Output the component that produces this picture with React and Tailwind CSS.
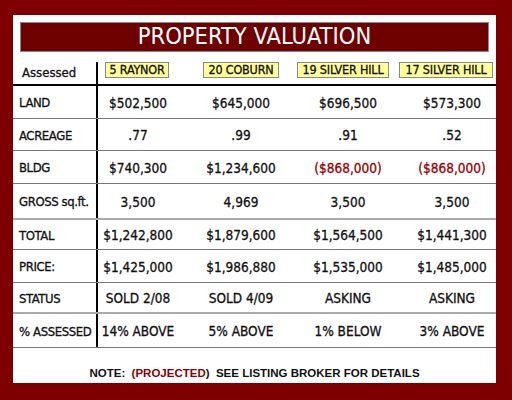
import React from "react";

const rows = [
  { label: "LAND", h: "h-[33px]", line: "border-b border-[#777]", v: ["$502,500", "$645,000", "$696,500", "$573,300"] },
  { label: "ACREAGE", h: "h-[32px]", line: "border-b border-[#777]", v: [".77", ".99", ".91", ".52"] },
  { label: "BLDG", h: "h-[33px]", line: "border-b border-[#777]", v: ["$740,300", "$1,234,600", "($868,000)", "($868,000)"], red: [false, false, true, true] },
  { label: "GROSS sq.ft.", h: "h-[36px]", line: "border-b-2 border-[#aaa]", v: ["3,500", "4,969", "3,500", "3,500"] },
  { label: "TOTAL", h: "h-[30px]", line: "border-b border-[#777]", v: ["$1,242,800", "$1,879,600", "$1,564,500", "$1,441,300"] },
  { label: "PRICE:", h: "h-[33px]", line: "border-b border-[#777]", v: ["$1,425,000", "$1,986,880", "$1,535,000", "$1,485,000"] },
  { label: "STATUS", h: "h-[31px]", line: "border-b-2 border-[#aaa]", v: ["SOLD 2/08", "SOLD 4/09", "ASKING", "ASKING"] },
  { label: "% ASSESSED", h: "h-[34px]", line: "border-b border-[#777]", v: ["14% ABOVE", "5% ABOVE", "1% BELOW", "3% ABOVE"] },
];

const font = { fontFamily: '"DejaVu Sans Condensed", "DejaVu Sans", sans-serif' };

const box =
  "h-[16px] bg-[#ffff99] border border-[#888] flex items-center justify-center text-[12.5px] leading-none whitespace-nowrap tracking-[-0.2px] [-webkit-text-stroke:0.3px_#111]";

export default function App() {
  return (
    <div className="w-[512px] h-[400px] bg-[#7f0000] pt-[15px] pl-[13px]" style={font}>
      <div className="w-[483px] h-[368px] bg-white flex flex-col text-[#111]">
        <div className="ml-[7px] mt-[7px] w-[469px] h-[30px] bg-[#6e0000] border border-[#8a8a8a] flex items-center justify-center">
          <span className="text-white text-[23.5px] leading-none">PROPERTY VALUATION</span>
        </div>
        <div className="mt-[10px] h-[22px] flex items-start">
          <div className="w-[85px] h-full border-r-2 border-black pl-[9px] flex items-center text-[13px] [-webkit-text-stroke:0.3px_#111]">Assessed</div>
          <div className={`ml-[7px] w-[64px] ${box}`}>5 RAYNOR</div>
          <div className={`ml-[34px] w-[76px] ${box}`}>20 COBURN</div>
          <div className={`ml-[18px] w-[92px] ${box}`}>19 SILVER HILL</div>
          <div className={`ml-[10px] w-[94px] ${box}`}>17 SILVER HILL</div>
        </div>
        <div className="h-[2px] bg-black" />
        {rows.map((r) => (
          <div key={r.label} className={`grid grid-cols-[85px_80px_126px_88px_104px] ${r.h} ${r.line} text-[13.5px] [-webkit-text-stroke:0.3px_currentColor]`}>
            <div className="border-r-2 border-black pl-[6px] pt-[2px] flex items-center whitespace-nowrap text-[13px] tracking-[-0.4px]">{r.label}</div>
            {r.v.map((val, i) => (
              <div
                key={i}
                className={`flex items-center justify-center pt-[2px] whitespace-nowrap ${i === 3 ? "pl-4" : ""} ${r.red && r.red[i] ? "text-[#990000]" : ""}`}
              >
                {val}
              </div>
            ))}
          </div>
        ))}
        <div className="flex-1 flex items-end justify-center pb-[1px]">
          <span
            className="text-[11.5px] font-bold whitespace-pre text-[#111]"
            style={{ fontFamily: '"Liberation Sans", Arial, sans-serif' }}
          >
            {"NOTE:  "}
            <span className="text-[#8b0000]">(PROJECTED</span>
            {")  SEE LISTING BROKER FOR DETAILS"}
          </span>
        </div>
      </div>
    </div>
  );
}
